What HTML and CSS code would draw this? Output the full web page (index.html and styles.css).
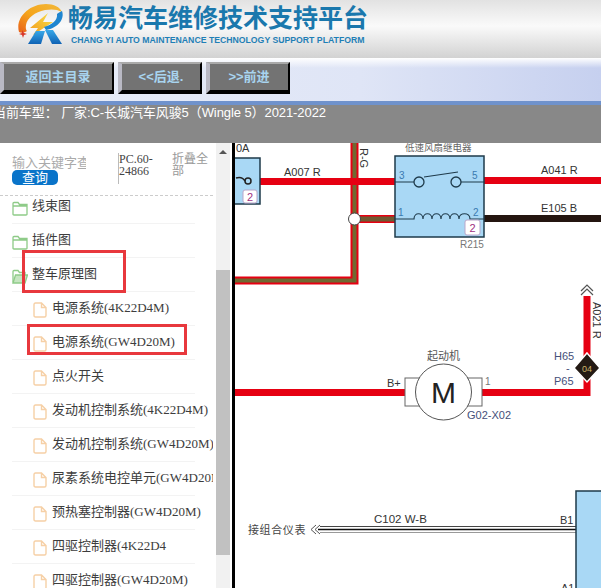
FILE: index.html
```html
<!doctype html>
<html lang="zh">
  <head>
    <meta charset="UTF-8" />
    <meta name="viewport" content="width=device-width, initial-scale=1.0" />
    <title>畅易汽车维修技术支持平台</title>
    <link rel="stylesheet" href="styles.css">
  </head>
  <body>
    <svg class="defs" width="0" height="0">
      <defs>
        <linearGradient id="ring" x1="0" y1="1" x2="1" y2="0">
          <stop offset="0" stop-color="#e8601a" />
          <stop offset="0.45" stop-color="#f5a51c" />
          <stop offset="1" stop-color="#f2b83a" />
        </linearGradient>
        <linearGradient id="bolt" x1="1" y1="0" x2="0" y2="1">
          <stop offset="0" stop-color="#f8e04a" />
          <stop offset="1" stop-color="#f29a1c" />
        </linearGradient>
        <linearGradient id="leg" x1="0" y1="0" x2="0" y2="1">
          <stop offset="0" stop-color="#38a8e8" />
          <stop offset="1" stop-color="#0f62b4" />
        </linearGradient>
        <symbol id="folder" viewBox="0 0 16 15">
          <path d="M1 13.500V2.500Q1 1.500 2 1.500H6L7.500 3.500H15V13.500Q15 14 14 14H2Q1 14 1 13.500ZM1 5H15" fill="none" stroke="#8ecb88" stroke-width="1.300" />
        </symbol>
        <symbol id="folder-open" viewBox="0 0 16 15">
          <path d="M1 13.500V2.500Q1 1.500 2 1.500H6L7.500 3.500H13V6" fill="none" stroke="#8ecb88" stroke-width="1.300" />
          <path d="M1 14L3.500 6H15.500L13 14Z" fill="#c5e5c0" stroke="#8ecb88" stroke-width="1.300" />
        </symbol>
        <symbol id="file" viewBox="0 0 14 16">
          <path d="M1 2.500Q1 1 2.500 1H8.500L13 5.500V13.500Q13 15 11.500 15H2.500Q1 15 1 13.500ZM8.500 1V5.500H13" fill="none" stroke="#f6d0a6" stroke-width="1.400" />
        </symbol>
      </defs>
    </svg>

    <header class="header">
      <svg class="logo" width="50" height="46" viewBox="0 0 50 46">
        <path d="M3 29C-1 15 13 1 30 1C38 1 44 4 46 9C41 6 35 6 29 7C19 9 11 15 10 22C9.500 25 10 27 11 28C8 30 5 30 3 29Z" fill="url(#ring)" />
        <path d="M32 10L14 25H22L17 32L37 19H27Z" fill="url(#bolt)" />
        <path d="M6 27L8 30L11 31L8 32L7 35L6 32L3 31L6 30Z" fill="#d8382a" />
        <path d="M46 8C49 16 42 25 30 27L28 24C36 22 42 17 41 11C42 10 44 9 46 8Z" fill="#1f86d0" />
        <path d="M12 41L20 28H29L25 41Z" fill="url(#leg)" />
        <path d="M29 27H37L46 41H36Z" fill="url(#leg)" />
      </svg>
      <div class="brand">
        <div class="brand-cn">畅易汽车维修技术支持平台</div>
        <div class="brand-en">CHANG YI AUTO MAINTENANCE TECHNOLOGY SUPPORT PLATFORM</div>
      </div>
    </header>

    <nav class="nav">
      <a class="nav-btn nav-btn-home">返回主目录</a>
      <a class="nav-btn">&lt;&lt;后退.</a>
      <a class="nav-btn">&gt;&gt;前进</a>
    </nav>

    <div class="car-bar">当前车型： 厂家:C-长城汽车风骏5（Wingle 5）2021-2022</div>

    <main class="main">
      <aside class="side">
        <div class="side-content">
          <div class="search">
            <div class="search-box">
              <input class="search-input" type="text" placeholder="输入关键字查询" />
              <button class="search-btn" type="button">查询</button>
            </div>
            <div class="search-code">PC.60-24866</div>
            <div class="search-fold">折叠全部</div>
          </div>
          <ul class="tree">
            <li class="row"><svg class="icon-folder"><use href="#folder" /></svg>线束图</li>
            <li class="row"><svg class="icon-folder"><use href="#folder" /></svg>插件图</li>
            <li class="row"><svg class="icon-folder"><use href="#folder-open" /></svg>整车原理图</li>
            <li class="row row-sub"><svg class="icon-file"><use href="#file" /></svg>电源系统(4K22D4M)</li>
            <li class="row row-sub"><svg class="icon-file"><use href="#file" /></svg>电源系统(GW4D20M)</li>
            <li class="row row-sub"><svg class="icon-file"><use href="#file" /></svg>点火开关</li>
            <li class="row row-sub"><svg class="icon-file"><use href="#file" /></svg>发动机控制系统(4K22D4M)</li>
            <li class="row row-sub"><svg class="icon-file"><use href="#file" /></svg>发动机控制系统(GW4D20M)</li>
            <li class="row row-sub"><svg class="icon-file"><use href="#file" /></svg>尿素系统电控单元(GW4D20M)</li>
            <li class="row row-sub"><svg class="icon-file"><use href="#file" /></svg>预热塞控制器(GW4D20M)</li>
            <li class="row row-sub"><svg class="icon-file"><use href="#file" /></svg>四驱控制器(4K22D4</li>
            <li class="row row-sub"><svg class="icon-file"><use href="#file" /></svg>四驱控制器(GW4D20M)</li>
          </ul>
        </div>
        <div class="scrollbar">
          <div class="scroll-arrow"></div>
          <div class="scroll-thumb"></div>
        </div>
        <div class="mark mark-group"></div>
        <div class="mark mark-item"></div>
      </aside>

      <div class="diagram">
        <svg class="schematic" width="366" height="445" viewBox="235 143 366 445">
          <!-- wires -->
          <path d="M260 181.500H395" class="wire-red" />
          <path d="M484 180.500H601" class="wire-red" />
          <path d="M484 218.500H601" stroke="#241510" stroke-width="7" fill="none" />
          <path d="M354.500 143V280.500H235" stroke="#e60012" stroke-width="8" fill="none" />
          <path d="M354.500 143V280.500H235" stroke="#6f6a32" stroke-width="4" fill="none" />
          <path d="M354.500 219H395" stroke="#e60012" stroke-width="8" fill="none" />
          <path d="M354.500 219H395" stroke="#6f5a32" stroke-width="5" fill="none" />
          <path d="M351 181.500H358" stroke="#e60012" stroke-width="7" />
          <circle cx="354.500" cy="219" r="6" fill="#fff" stroke="#444" />
          <path d="M235 392.500H405" class="wire-red" />
          <path d="M482 392.500H587V296" class="wire-red" />

          <!-- left relay -->
          <rect x="230" y="158" width="30" height="46" class="box" />
          <path d="M236 178Q242 176 245 181" stroke="#222" stroke-width="1.500" fill="none" />
          <circle cx="248" cy="181" r="3" fill="none" stroke="#222" stroke-width="1.500" />
          <rect x="243" y="190" width="14" height="13" rx="2" class="badge" />
          <text x="250" y="200.500" class="badge-text">2</text>
          <text x="236" y="152" class="t11">0A</text>

          <!-- wiper relay -->
          <rect x="395" y="156" width="89" height="81" class="box" />
          <path d="M395 182H414M461 182H484M424 177L458 172" stroke="#1e3a4a" stroke-width="1.200" fill="none" />
          <circle cx="419" cy="182" r="5" fill="none" stroke="#1e3a4a" stroke-width="1.300" />
          <circle cx="456" cy="182" r="5" fill="none" stroke="#1e3a4a" stroke-width="1.300" />
          <path d="M395 219H414C414 212 423 212 423 219C423 212 432 212 432 219C432 212 441 212 441 219C441 212 450 212 450 219C450 212 459 212 459 219C459 212 470 212 470 219H484" stroke="#1e3a4a" stroke-width="1.200" fill="none" />
          <text x="399" y="179" class="pin">3</text>
          <text x="472" y="179" class="pin">5</text>
          <text x="398" y="216" class="pin">1</text>
          <text x="473" y="216" class="pin">2</text>
          <rect x="465" y="220" width="15" height="15" rx="2" class="badge" />
          <text x="472.500" y="232" class="badge-text">2</text>
          <text x="405" y="151" class="t-relay">低速风扇继电器</text>
          <text x="460" y="248" class="t-grey">R215</text>

          <!-- wire labels -->
          <text x="284" y="176" class="t11">A007 R</text>
          <text x="541" y="174" class="t11">A041 R</text>
          <text x="541" y="212" class="t11">E105 B</text>
          <text x="360" y="148" class="t11" transform="rotate(90 360 148)">R-G</text>

          <!-- starter motor -->
          <rect x="405" y="378" width="77" height="28" fill="#fff" stroke="#666" />
          <circle cx="443.500" cy="392" r="28" fill="#fff" stroke="#555" />
          <text x="443.500" y="403" class="t-motor">M</text>
          <text x="427" y="360" class="t-name">起动机</text>
          <text x="387" y="387" class="t11">B+</text>
          <text x="485" y="385" class="t-grey">1</text>
          <text x="467" y="419" class="t-navy">G02-X02</text>

          <!-- connector -->
          <path d="M581 295L587 289L593 295M581 291L587 285L593 291" stroke="#555" stroke-width="1.200" fill="none" />
          <text x="593" y="302" class="t11" transform="rotate(90 593 302)">A021 R</text>
          <path d="M587 353L600 368L587 382L574 368Z" fill="#231a14" stroke="#fff" stroke-width="1.500" />
          <text x="587" y="372" class="t-diamond">04</text>
          <text x="554" y="360" class="t-navy">H65</text>
          <text x="566" y="372" class="t-navy">-</text>
          <text x="554" y="385" class="t-navy">P65</text>

          <!-- instrument lead -->
          <path d="M320 526.500H576" stroke="#444" stroke-width="1" fill="none" />
          <path d="M318 529.500H576" stroke="#111" stroke-width="1.500" fill="none" />
          <path d="M320 532.500H576" stroke="#999" stroke-width="1" fill="none" />
          <path d="M316 525L311 529.500L316 534M320 525L315 529.500L320 534" stroke="#555" fill="none" />
          <text x="248" y="534" class="t-note">接组合仪表</text>
          <text x="374" y="523" class="t-wide">C102 W-B</text>
          <text x="560" y="524" class="t11">B1</text>
          <rect x="576" y="491" width="40" height="110" class="box" />
          <text x="561" y="592" class="t11">A1</text>
        </svg>
      </div>
    </main>
  </body>
</html>
```

FILE: styles.css
```css
* {
  box-sizing: border-box;
}
body {
  margin: 0;
  width: 601px;
  height: 588px;
  overflow: hidden;
  font-family: "Liberation Sans", "Noto Sans CJK SC", sans-serif;
  background: #fff;
}
.defs {
  display: block;
}

/* header */
.header {
  display: flex;
  height: 58px;
  padding: 3px 0 0 16px;
  background: linear-gradient(#e2e2e2, #fafafa 45%, #d2d2d2);
}
.logo {
  flex: none;
}
.brand {
  margin-left: 2px;
}
.brand-cn {
  height: 31px;
  font-size: 25px;
  line-height: 31px;
  font-weight: bold;
  color: #1a78ad;
  white-space: nowrap;
}
.brand-en {
  margin: 1px 0 0 3px;
  font-size: 8.700px;
  line-height: 10px;
  font-weight: bold;
  color: #1f7fb6;
  white-space: nowrap;
}

/* nav */
.nav {
  display: flex;
  gap: 4px;
  height: 47px;
  padding-top: 4px;
  border-bottom: 4px solid #6f92cc;
  background: linear-gradient(#fff, rgba(255, 255, 255, 0) 10px), linear-gradient(90deg, #e8edf8, #dfe5f6 60%, #c6d0ef);
}
.nav-btn {
  width: 84px;
  height: 32px;
  border-style: solid;
  border-width: 2px 2px 4px 4px;
  border-color: #a9a9a9 #000 #000 #b9b9c4;
  background: #737373;
  color: #a8d4ef;
  font-size: 13px;
  line-height: 26px;
  font-weight: bold;
  text-align: center;
}
.nav-btn-home {
  width: 114px;
}

/* current car */
.car-bar {
  height: 38px;
  text-indent: -7px;
  background: #888;
  color: #fff;
  font-size: 13px;
  line-height: 16px;
  letter-spacing: -0.080px;
  white-space: pre;
}

/* body */
.main {
  display: flex;
  height: 445px;
}
.side {
  position: relative;
  display: flex;
  flex: none;
  width: 232px;
}
.side-content {
  flex: none;
  width: 213px;
  margin-right: 3px;
  overflow: hidden;
}
.search {
  display: flex;
  height: 53px;
  padding: 10px 0 0 12px;
  border-bottom: 1px dashed #ccc;
}
.search-box {
  flex: none;
  width: 106px;
}
.search-input {
  display: block;
  width: 74px;
  height: 17px;
  padding: 2px 0 0;
  border: none;
  outline: none;
  background: none;
  font-family: "Liberation Serif", "Noto Sans CJK SC", serif;
  font-size: 13px;
}
.search-input::placeholder {
  color: #aaa;
}
.search-btn {
  display: block;
  width: 46px;
  height: 15px;
  padding: 0;
  border: none;
  border-radius: 5px;
  background: #0a74c9;
  color: #fff;
  font-family: "Liberation Sans", "Noto Sans CJK SC", sans-serif;
  font-size: 13px;
  line-height: 15px;
}
.search-code {
  flex: none;
  width: 54px;
  height: 31px;
  border-left: 1px solid #bbb;
  font-family: "Liberation Serif", "Noto Sans CJK SC", serif;
  font-size: 12px;
  line-height: 12px;
  color: #444;
}
.search-fold {
  flex: none;
  width: 37px;
  font-size: 12px;
  line-height: 12px;
  color: #999;
}
.tree {
  margin: 0;
  padding: 0;
  list-style: none;
}
.row {
  display: flex;
  width: 183px;
  height: 34px;
  margin-left: 12px;
  padding-top: 7px;
  border-bottom: 1px solid #f3f3f3;
  font-family: "Liberation Serif", "Noto Sans CJK SC", serif;
  font-size: 13px;
  line-height: 18px;
  color: #3d3d3d;
  white-space: nowrap;
}
.row:first-child {
  height: 28px;
  padding-top: 1px;
}
.row-sub {
  padding-left: 21px;
}
.icon-folder {
  flex: none;
  width: 16px;
  height: 15px;
  margin: 4px 4px 0 0;
}
.icon-file {
  flex: none;
  width: 14px;
  height: 16px;
  margin: 3px 5px 0 0;
}
.scrollbar {
  flex: none;
  width: 14px;
  background: #f1f1f1;
}
.scroll-arrow {
  width: 0;
  margin: 7px auto 0;
  border: 4px solid transparent;
  border-top: 0;
  border-bottom: 4px solid #555;
}
.scroll-thumb {
  height: 285px;
  margin-top: 116px;
  background: #c1c1c1;
}
.mark {
  position: absolute;
  border: 3px solid #e8383d;
}
.mark-group {
  top: 107px;
  left: 22px;
  width: 104px;
  height: 43px;
}
.mark-item {
  top: 181px;
  left: 27px;
  width: 160px;
  height: 31px;
}

/* schematic */
.diagram {
  flex: 1;
  overflow: hidden;
  border-left: 3px solid #000;
  background: #fff;
}
.schematic {
  display: block;
  font-family: "Liberation Sans", "Noto Sans CJK SC", sans-serif;
}
.wire-red {
  fill: none;
  stroke: #e60012;
  stroke-width: 7;
}
.box {
  fill: #a9d8f5;
  stroke: #1e3a4a;
  stroke-width: 1.500;
}
.badge {
  fill: #fff;
  stroke: #b9a6c9;
}
.badge-text {
  font-size: 11px;
  fill: #a0307f;
  text-anchor: middle;
}
.pin {
  font-size: 10px;
  fill: #3a7ab0;
}
.t11 {
  font-size: 11px;
  fill: #333;
}
.t-wide {
  font-size: 11.500px;
  fill: #333;
}
.t-relay {
  font-size: 9.500px;
  fill: #666;
}
.t-grey {
  font-size: 10px;
  fill: #777;
}
.t-motor {
  font-size: 30px;
  fill: #222;
  text-anchor: middle;
}
.t-name {
  font-size: 11px;
  fill: #555;
}
.t-navy {
  font-size: 11px;
  fill: #45507a;
}
.t-diamond {
  font-size: 9px;
  fill: #c9b36a;
  text-anchor: middle;
}
.t-note {
  font-size: 11px;
  letter-spacing: 0.600px;
  fill: #444;
}
```
